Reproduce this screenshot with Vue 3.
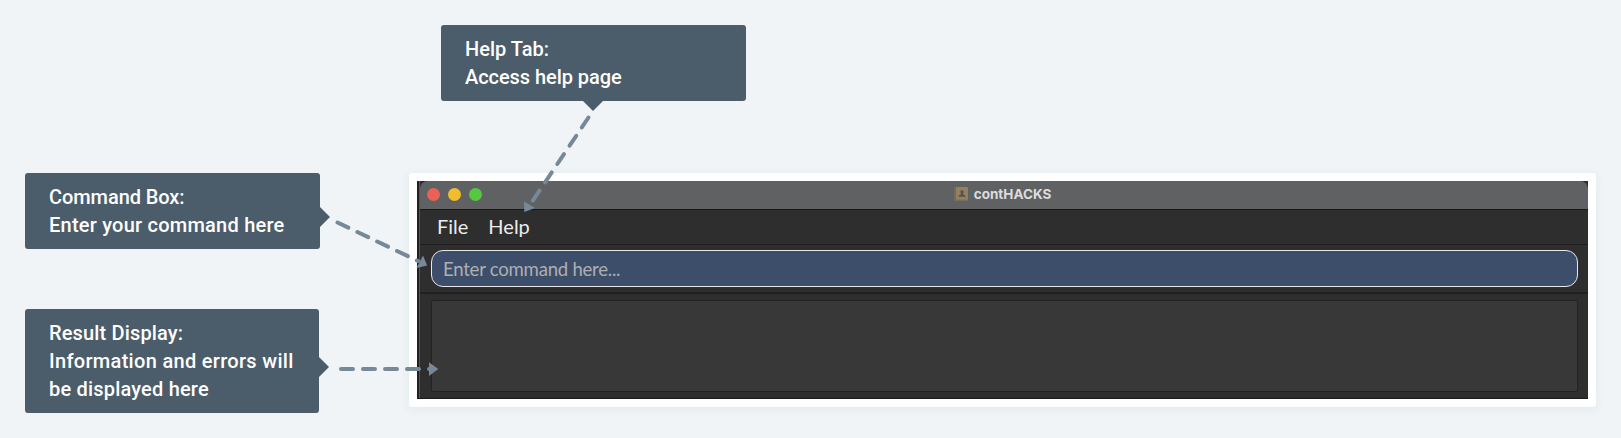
<script setup>
const callouts = [
  { id: 'help', side: 'down', lines: ['Help Tab:', 'Access help page'] },
  { id: 'entry', side: 'right', lines: ['Command Box:', 'Enter your command here'] },
  { id: 'output', side: 'right', lines: ['Result Display:', 'Information and errors will', 'be displayed here'] },
]
</script>

<template>
  <main class="canvas">
    <section class="frame">
      <div class="window">
        <header class="titlebar">
          <div class="lights"><i class="red"></i><i class="yellow"></i><i class="green"></i></div>
          <svg class="book" width="14" height="14" viewBox="0 0 14 14">
            <rect width="14" height="14" rx="1" fill="#92805f" />
            <rect width="2" height="14" fill="#756a60" />
            <rect y="12.6" width="14" height="1.4" fill="#77705f" />
            <path d="M8 3.2c1.3 0 1.8 1 1.6 2.1-.1.8-.5 1.1-.6 1.7.1.8 2.5.7 2.6 2.8H4.4C4.5 7.7 6.900 7.800 7 7c-.1-.6-.5-.9-.6-1.700C6.200 4.200 6.700 3.200 8 3.200Z" fill="#5a5149" />
          </svg>
          <span class="title">contHACKS</span>
        </header>
        <nav class="menu"><span>File</span><span>Help</span></nav>
        <div class="command-row"><div class="command">Enter command here...</div></div>
        <div class="result-row"><div class="result"></div></div>
      </div>
    </section>

    <aside v-for="c in callouts" :key="c.id" class="callout" :class="[c.id, c.side]">
      <div v-for="(line, i) in c.lines" :key="line" :class="'line' + i">{{ line }}</div>
    </aside>

    <svg class="arrows" width="1621" height="438" viewBox="0 0 1621 438">
      <g fill="none" stroke="#778899" stroke-width="4" stroke-linecap="round" stroke-dasharray="12 10">
        <path d="M588.500 117.500L532.500 201" />
        <path d="M337.500 222.500L418 261" />
        <path d="M341 369H430" />
      </g>
      <g fill="#778899">
        <path d="M524 201.500L535 208L524.300 212Z" />
        <path d="M423 255.500L427.200 265.500L416.500 268Z" />
        <path d="M429 362.300L438.300 369L429 376Z" />
      </g>
    </svg>
  </main>
</template>

<style>
body {
  margin: 0;
  background: #f0f4f7;
}
</style>

<style scoped>
.canvas {
  position: relative;
  box-sizing: border-box;
  width: 1621px;
  height: 438px;
  padding: 173px 25px 31px 409px;
  overflow: hidden;
  background: #f0f4f7;
}
.frame {
  box-sizing: border-box;
  height: 234px;
  padding: 8px;
  border-radius: 3px;
  background: #fff;
  box-shadow: 0 2px 10px rgba(60, 85, 105, 0.08);
}
.window {
  display: flex;
  flex-direction: column;
  box-sizing: border-box;
  height: 218px;
  padding-left: 3px;
  background: linear-gradient(90deg, #202020 2px, #555 2px, #555 3px, #2e2e2e 3px);
  border-bottom: 1px solid #1c191b;
}
.titlebar {
  position: relative;
  display: flex;
  align-items: center;
  justify-content: center;
  box-sizing: border-box;
  height: 29px;
  padding: 0 3px 2px 0;
  gap: 6px;
  border-radius: 8px 8px 0 0;
  border-bottom: 1px solid #171717;
  background: #606163;
}
.lights {
  position: absolute;
  left: 7px;
  top: 7px;
  display: flex;
  gap: 8px;
}
.lights i {
  width: 13px;
  height: 13px;
  border-radius: 50%;
}
.red { background: #eb6158; }
.yellow { background: #f0bd30; }
.green { background: #54c93f; }
.title {
  font: 700 13.5px/20px Inter, sans-serif;
  color: #dcdcdc;
}
.menu {
  display: flex;
  box-sizing: border-box;
  height: 35px;
  padding: 0 17px;
  gap: 20px;
  border-bottom: 1px solid #1e1e1e;
  font: 20px/33px Lato, sans-serif;
  color: #ececec;
}
.command-row {
  box-sizing: border-box;
  height: 49px;
  padding: 5px 10px 0 11px;
  border-bottom: 2px solid #202020;
}
.command {
  box-sizing: border-box;
  height: 37px;
  padding-left: 11px;
  border: 1px solid #e8e8ec;
  border-radius: 12px;
  background: #3d4e6a;
  font: 18.6px/36px Lato, sans-serif;
  letter-spacing: -0.25px;
  color: #adafb3;
}
.result-row {
  padding: 6px 10px 0 11px;
}
.result {
  box-sizing: border-box;
  height: 92px;
  border: 1px solid #232323;
  border-radius: 2px;
  background: #383838;
}
.callout {
  position: absolute;
  box-sizing: border-box;
  padding: 10px 24px;
  border-radius: 3px;
  background: #4b5c6a;
  font: 500 20px/28px Roboto, sans-serif;
  color: #fff;
  white-space: nowrap;
}
.callout::after {
  content: '';
  position: absolute;
  border: 10px solid transparent;
}
.help { left: 441px; top: 25px; width: 305px; height: 76px; }
.entry { left: 25px; top: 173px; width: 295px; height: 76px; }
.output { left: 25px; top: 309px; width: 294px; height: 104px; }
.help .line1 { letter-spacing: -0.06px; }
.entry .line0 { letter-spacing: -0.08px; }
.entry .line1 { letter-spacing: 0.23px; }
.output .line0 { letter-spacing: 0.15px; }
.output .line1 { letter-spacing: 0.31px; }
.output .line2 { letter-spacing: 0.19px; }
.down::after {
  left: 142px;
  top: 100%;
  border-top-color: #4b5c6a;
  border-bottom: 0;
}
.right::after {
  left: 100%;
  top: 34px;
  border-left-color: #4b5c6a;
  border-right: 0;
}
.output::after { top: 48px; }
.arrows {
  position: absolute;
  left: 0;
  top: 0;
}
</style>
